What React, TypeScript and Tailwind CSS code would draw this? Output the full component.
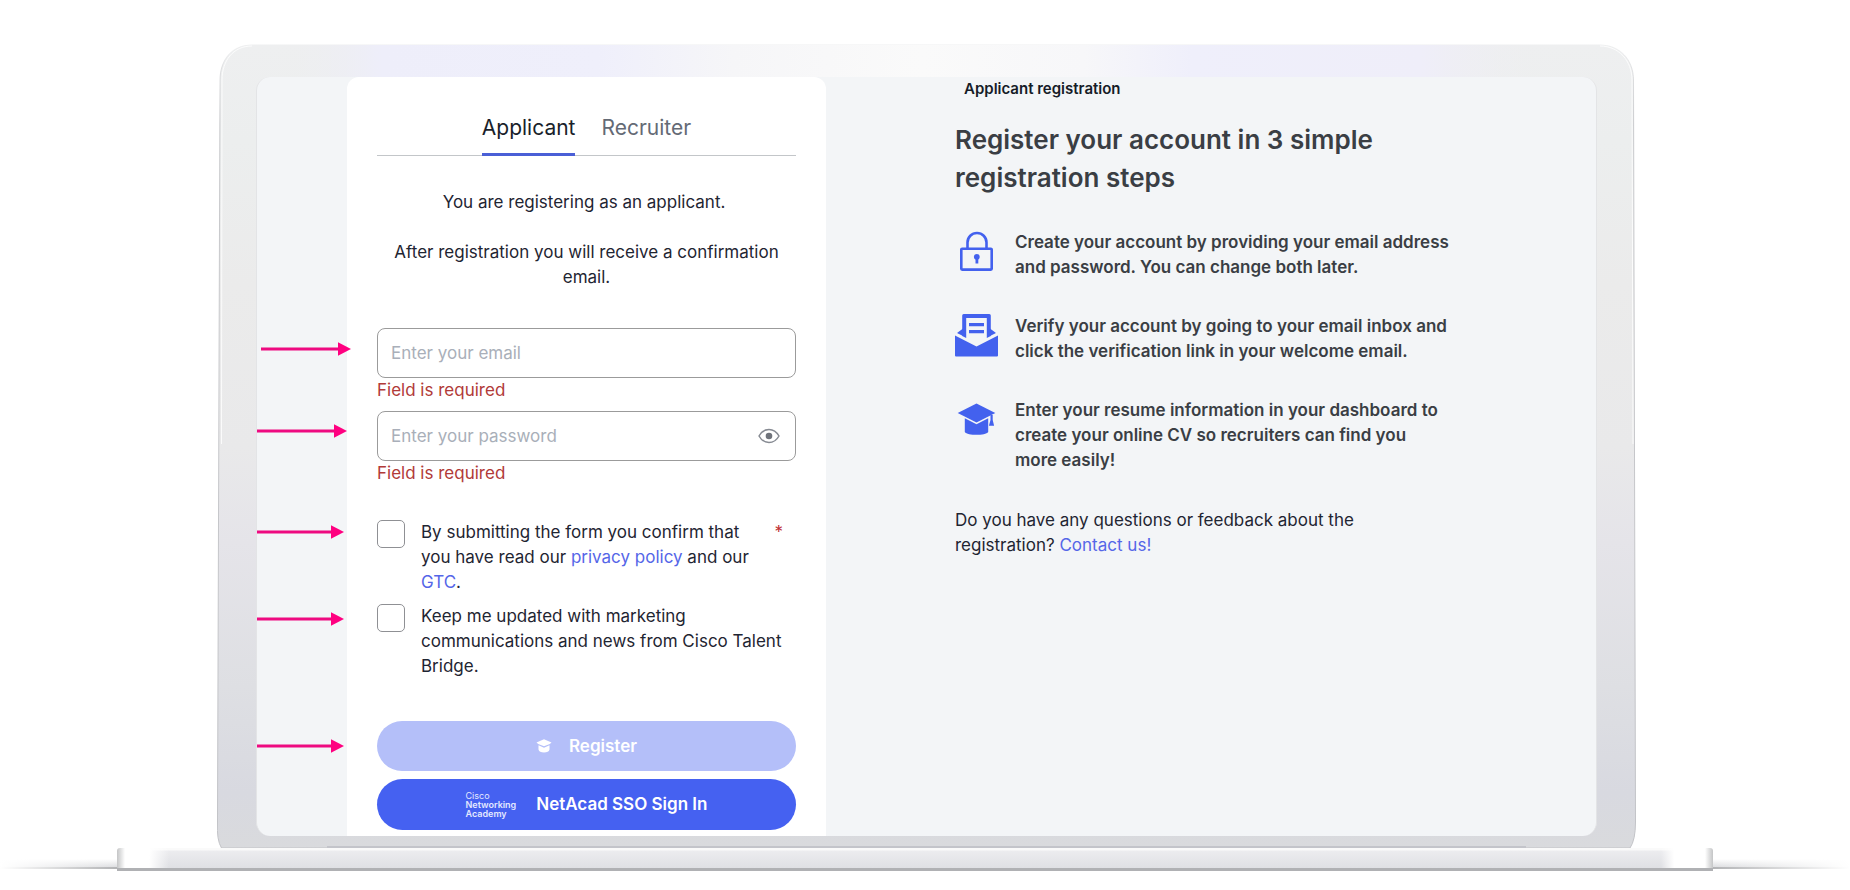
import type { ReactNode } from "react";

function Arrow({ className }: { className: string }) {
  return (
    <svg
      className={"pointer-events-none absolute right-full h-[14px] w-[90px] " + className}
      viewBox="0 0 90 14"
      aria-hidden="true"
    >
      <rect x="0" y="5.5" width="78" height="3" fill="#ee0a80" />
      <path d="M77 .3 90 7 77 13.7Z" fill="#ff0080" />
    </svg>
  );
}

function LidDrawing() {
  const shape =
    "M35 .5H1383C1403 .5 1416.500 16 1416.500 36L1418.500 778Q1418.500 796 1413 804H4.500Q-.5 796 .5 778L3 36C3 16 15 .5 35 .5Z";
  return (
    <svg
      className="absolute inset-0 h-full w-full"
      viewBox="0 0 1419 804"
      preserveAspectRatio="none"
      aria-hidden="true"
    >
      <defs>
        <linearGradient id="side" x1="0" y1="0" x2="0" y2="1">
          <stop offset="0" stopColor="#eeeff0" />
          <stop offset=".12" stopColor="#eceeee" />
          <stop offset=".3" stopColor="#ebebeb" />
          <stop offset=".5" stopColor="#e9e9ea" />
          <stop offset=".62" stopColor="#e5e4e9" />
          <stop offset=".8" stopColor="#dedfe3" />
          <stop offset=".93" stopColor="#d8d9e0" />
          <stop offset="1" stopColor="#d9dadd" />
        </linearGradient>
        <linearGradient id="top" x1="0" y1="0" x2="1" y2="0">
          <stop offset=".02" stopColor="#eeeeee" stopOpacity="0" />
          <stop offset=".1" stopColor="#eeeefa" />
          <stop offset=".26" stopColor="#efeffb" />
          <stop offset=".36" stopColor="#f6f6f8" />
          <stop offset=".5" stopColor="#fafafa" />
          <stop offset=".62" stopColor="#f7f7f9" />
          <stop offset=".7" stopColor="#efeffb" />
          <stop offset=".87" stopColor="#efeef9" />
          <stop offset=".97" stopColor="#eeeeee" stopOpacity="0" />
        </linearGradient>
        <linearGradient id="edge" x1="0" y1="0" x2="0" y2="1">
          <stop offset="0" stopColor="#c9cacd" stopOpacity="0" />
          <stop offset=".03" stopColor="#c9cacd" stopOpacity=".5" />
          <stop offset=".1" stopColor="#c4c5c8" stopOpacity=".9" />
          <stop offset="1" stopColor="#c2c3c7" />
        </linearGradient>
      </defs>
      <path d={shape} fill="url(#side)" />
      <rect x="30" y="1" width="1350" height="40" fill="url(#top)" />
      <path d={shape} fill="none" stroke="url(#edge)" />
      <path
        d="M1383 2C1402 2 1415 17 1415 36L1416 400M4.500 400 5 36C5 17 16 2 35 2"
        fill="none"
        stroke="#fff"
        strokeOpacity=".8"
      />
    </svg>
  );
}

function LockIcon() {
  return (
    <svg viewBox="0 0 44 44" className="h-11 w-11" fill="none" aria-hidden="true">
      <path d="M12.500 19V12.500a9.500 9.500 0 0 1 19 0V19" stroke="#4361ee" strokeWidth="2.600" />
      <rect x="6.300" y="18.800" width="30.400" height="20.800" rx=".8" stroke="#4361ee" strokeWidth="2.600" />
      <circle cx="21.800" cy="26.800" r="2.900" fill="#4361ee" />
      <path d="M20.500 27h2.800v6.500h-2.800z" fill="#4361ee" />
    </svg>
  );
}

function MailIcon() {
  return (
    <svg viewBox="0 0 44 44" className="h-11 w-11" aria-hidden="true">
      <path d="M0 21.500 21.500 32.500 43 21.500V41.500a1 1 0 0 1-1 1H1a1 1 0 0 1-1-1Z" fill="#4361ee" />
      <path d="M8 14.500 2 19 8 22ZM35 14.500 41 19 35 22Z" fill="#4361ee" />
      <path
        fillRule="evenodd"
        d="M8.700 0H34.300a1.500 1.500 0 0 1 1.500 1.500V22L31.800 24V4H11.200V24L7.200 22V1.500A1.500 1.500 0 0 1 8.700 0Z"
        fill="#4361ee"
      />
      <path d="M14 9h15v3.300H14zM14 16h15v3.300H14z" fill="#4361ee" />
    </svg>
  );
}

function CapIcon() {
  return (
    <svg viewBox="0 0 44 44" className="h-11 w-11" fill="#4361ee" aria-hidden="true">
      <path d="M21.500 5.500 40.300 15 21.500 24.500 2.700 15Z" />
      <path d="M9.800 20.300 21.500 26.300 33.200 20.300V34C30.500 37.800 12.500 37.800 9.800 34Z" />
      <path d="M35.500 17h2.200V22l1.400 5.800h-5.200L35.500 22Z" />
    </svg>
  );
}

function SmallCap() {
  return (
    <svg viewBox="0 0 16 14" className="h-[14px] w-4" fill="#fff" aria-hidden="true">
      <path d="M8 .3 15.500 3.500 13.800 5 8 7.200 2.200 5 .5 3.500Z" />
      <path d="M2.500 6.300 8 8.700 13.500 6.300V10.500C13 12.800 11 13.500 8 13.500S3 12.800 2.500 10.500Z" />
    </svg>
  );
}

function EyeIcon() {
  return (
    <svg viewBox="0 0 22 16" className="h-4 w-[22px]" fill="none" aria-hidden="true">
      <path
        d="M1 8C3.500 3.600 7 1.400 11 1.400S18.500 3.600 21 8C18.500 12.400 15 14.600 11 14.600S3.500 12.400 1 8Z"
        stroke="#868a92"
        strokeWidth="1.500"
      />
      <circle cx="11" cy="8" r="3.300" fill="#6f737b" />
    </svg>
  );
}

function Step({ icon, children }: { icon: ReactNode; children: ReactNode }) {
  return (
    <li className="flex gap-4">
      <span className="shrink-0">{icon}</span>
      <p className="max-w-[436px] font-semibold text-[#3a3e44]">{children}</p>
    </li>
  );
}

function BaseShadow({ className }: { className: string }) {
  return (
    <svg className={"h-full " + className} viewBox="0 0 100 23" preserveAspectRatio="none" aria-hidden="true">
      <defs>
        <linearGradient id="haze" x1="0" y1="0" x2="0" y2="1">
          <stop offset="0" stopColor="#d9dadd" stopOpacity="0" />
          <stop offset="1" stopColor="#d9dadd" />
        </linearGradient>
        <linearGradient id="fade" x1="0" y1="0" x2="1" y2="0">
          <stop offset="0" stopColor="#fff" />
          <stop offset="1" stopColor="#fff" stopOpacity="0" />
        </linearGradient>
      </defs>
      <rect y="11" width="100" height="9" fill="url(#haze)" />
      <rect y="19" width="100" height="2" fill="#b3b4b6" />
      <rect width="100" height="23" fill="url(#fade)" />
    </svg>
  );
}

const inputClass =
  "h-[50px] w-full rounded-lg border border-[#9b9b9b] bg-white px-[13px] text-[17px] text-[#1f2937] placeholder:text-[#a9afb9] outline-none";
const checkClass = "h-7 w-7 shrink-0 appearance-none rounded-[5px] border border-[#8f9094] bg-white";

export default function App() {
  return (
    <main className="min-h-[890px] overflow-hidden bg-white pt-11 font-['Inter','Liberation_Sans',sans-serif] text-[17px] leading-[25px] text-[#1f2532]">
      <div className="relative ml-[217px] mr-[214px] px-[39px] pb-3 pt-[33px]">
        <LidDrawing />
        <div className="relative flex overflow-hidden rounded-[14px] border-x border-[#e3e4e6] bg-[#f3f5f7] pl-[90px]">
          <section className="w-[479px] shrink-0 rounded-t-xl bg-white px-[30px] pb-[6px] pt-[33px]">
            <nav className="flex justify-center gap-[26px] border-b border-[#c3c6c9] text-[21px] leading-9">
              <button type="button" className="-mb-px border-b-[3px] border-[#4a5fd6] pb-[7px] text-[#1a1f2b]">
                Applicant
              </button>
              <button type="button" className="border-b-2 border-transparent pb-[7px] text-[#646a75]">
                Recruiter
              </button>
            </nav>
            <p className="mt-[34px] pr-[5px] text-center">You are registering as an applicant.</p>
            <p className="mt-[25px] text-center">
              After registration you will receive a confirmation email.
            </p>
            <form className="mt-[38px]" noValidate>
              <div className="relative">
                <Arrow className="top-[14px] mr-[26px]" />
                <input type="email" aria-label="Email" placeholder="Enter your email" className={inputClass} />
                <p className="text-[#b13a38]">Field is required</p>
              </div>
              <div className="relative mt-2">
                <Arrow className="top-[13px] mr-[30px]" />
                <input
                  type="password"
                  aria-label="Password"
                  placeholder="Enter your password"
                  className={inputClass}
                />
                <button type="button" aria-label="Show password" className="absolute right-4 top-[17px]">
                  <EyeIcon />
                </button>
                <p className="text-[#b13a38]">Field is required</p>
              </div>
              <div className="relative mt-[34px] flex gap-4">
                <Arrow className="top-[5px] mr-[33px]" />
                <input id="terms" type="checkbox" className={checkClass} />
                <label htmlFor="terms" className="flex-1">
                  By submitting the form you confirm that you have read our{" "}
                  <a href="#privacy" className="text-[#5566e8]">privacy policy</a> and our{" "}
                  <a href="#gtc" className="text-[#5566e8]">GTC</a>.
                </label>
                <span className="mr-[13px] text-[#c02f34]">*</span>
              </div>
              <div className="relative mt-[9px] flex gap-4">
                <Arrow className="top-[8px] mr-[33px]" />
                <input id="news" type="checkbox" className={checkClass} />
                <label htmlFor="news" className="flex-1">
                  Keep me updated with marketing communications and news from Cisco Talent Bridge.
                </label>
              </div>
              <div className="relative mt-[42px] flex flex-col gap-2 font-semibold text-white">
                <Arrow className="top-[18px] mr-[33px]" />
                <button
                  type="submit"
                  className="flex h-[50px] items-center justify-center gap-[17px] rounded-full bg-[#b4bff9]"
                >
                  <SmallCap />
                  Register
                </button>
                <button
                  type="button"
                  className="flex h-[51px] items-center justify-center gap-5 rounded-full bg-[#4561f1]"
                >
                  <span className="text-left text-[9px] font-semibold leading-[9px] text-[#e3e8ff]">
                    <span className="block font-normal">Cisco</span>
                    <span className="block">Networking</span>
                    <span className="block">Academy</span>
                  </span>
                  NetAcad SSO Sign In
                </button>
              </div>
            </form>
          </section>
          <section className="flex-1 pl-[129px]">
            <p className="pl-[9px] text-[15px] font-semibold leading-6 text-[#161c28]">Applicant registration</p>
            <h1 className="mt-5 max-w-[440px] text-[26px] font-semibold leading-[38px] text-[#3a3e44]">
              Register your account in 3 simple registration steps
            </h1>
            <ul className="mt-[33px] flex flex-col gap-[34px]">
              <Step icon={<LockIcon />}>
                Create your account by providing your email address and password. You can change both later.
              </Step>
              <Step icon={<MailIcon />}>
                Verify your account by going to your email inbox and click the verification link in your
                welcome email.
              </Step>
              <Step icon={<CapIcon />}>
                Enter your resume information in your dashboard to create your online CV so recruiters can
                find you more easily!
              </Step>
            </ul>
            <p className="mt-[35px] max-w-[440px]">
              Do you have any questions or feedback about the registration?{" "}
              <a href="#contact" className="text-[#5566e8]">Contact us!</a>
            </p>
          </section>
        </div>
        <div className="absolute bottom-0 left-[110px] right-[110px] h-[2px] bg-[#c3c4ca]" />
      </div>
      <div className="flex h-[23px] items-stretch">
        <BaseShadow className="w-[117px]" />
        <div className="flex flex-1 overflow-hidden rounded-t-[3px] border-b-[3px] border-[#b0b1b4] bg-linear-to-b from-[#fafafa] from-10% via-[#ececef] via-15% to-[#dfe0e4]">
          <div className="w-2 bg-linear-to-r from-[#c4c5c6] to-white" />
          <div className="w-11 bg-linear-to-r from-white from-55% to-white/0" />
          <div className="flex-1" />
          <div className="w-11 bg-linear-to-l from-white from-70% to-white/0" />
          <div className="w-2 bg-linear-to-l from-[#c4c5c6] to-white" />
        </div>
        <BaseShadow className="w-[137px] -scale-x-100" />
      </div>
    </main>
  );
}
